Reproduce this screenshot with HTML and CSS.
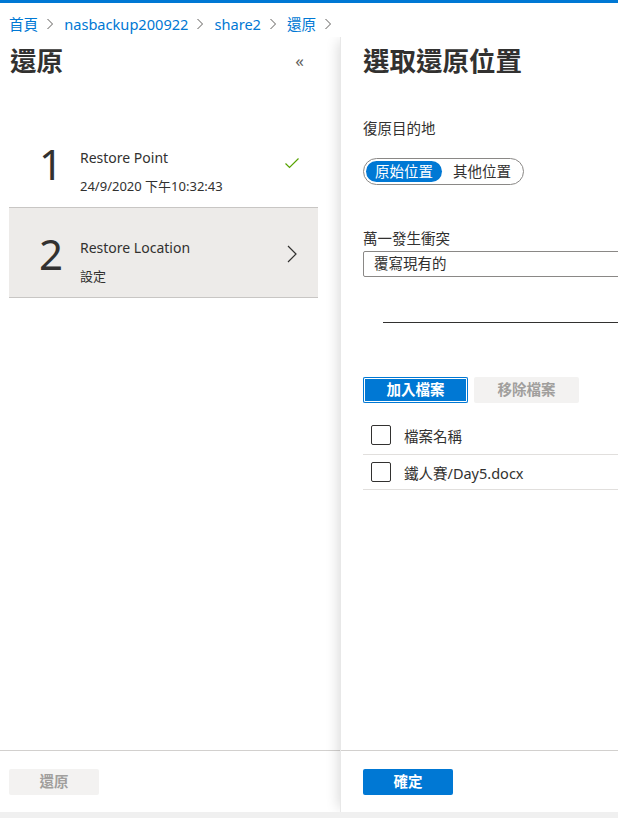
FILE: index.html
```html
<!DOCTYPE html>
<html lang="zh-Hant">
<head>
<meta charset="utf-8">
<title>還原</title>
<link rel="stylesheet" href="styles.css">
</head>
<body>
<div class="topbar"></div>
<nav class="crumbs">
  <a class="crumb">首頁</a>
  <svg class="sep" viewBox="0 0 8 12" width="8" height="12"><path d="M1.5 1 L6.5 6 L1.5 11" fill="none" stroke="#605e5c" stroke-width="1"/></svg>
  <a class="crumb">nasbackup200922</a>
  <svg class="sep" viewBox="0 0 8 12" width="8" height="12"><path d="M1.5 1 L6.5 6 L1.5 11" fill="none" stroke="#605e5c" stroke-width="1"/></svg>
  <a class="crumb">share2</a>
  <svg class="sep" viewBox="0 0 8 12" width="8" height="12"><path d="M1.5 1 L6.5 6 L1.5 11" fill="none" stroke="#605e5c" stroke-width="1"/></svg>
  <a class="crumb">還原</a>
  <svg class="sep" viewBox="0 0 8 12" width="8" height="12"><path d="M1.5 1 L6.5 6 L1.5 11" fill="none" stroke="#605e5c" stroke-width="1"/></svg>
</nav>
<div class="main">
  <section class="left">
    <div class="body">
      <div class="head">
        <h1 class="title">還原</h1>
        <span class="collapse">«</span>
      </div>
      <ul class="steps">
        <li class="step">
          <span class="num">1</span>
          <div class="stext">
            <div class="stitle">Restore Point</div>
            <div class="ssub">24/9/2020 下午10:32:43</div>
          </div>
          <svg class="sicon" viewBox="0 0 16 16" width="16" height="16"><path d="M1.5 8.5 L5.5 12.5 L14.5 3.5" fill="none" stroke="#57a300" stroke-width="1.2"/></svg>
        </li>
        <li class="step active">
          <span class="num">2</span>
          <div class="stext">
            <div class="stitle">Restore Location</div>
            <div class="ssub">設定</div>
          </div>
          <svg class="sicon chev" viewBox="0 0 12 18" width="12" height="18"><path d="M2 1 L10 9 L2 17" fill="none" stroke="#323130" stroke-width="1.2"/></svg>
        </li>
      </ul>
    </div>
    <footer class="foot">
      <button class="btn disabled">還原</button>
    </footer>
  </section>
  <section class="right">
    <div class="body rbody">
      <div class="head">
        <h2 class="title">選取還原位置</h2>
      </div>
      <div class="label first">復原目的地</div>
      <div class="toggle">
        <span class="opt on">原始位置</span>
        <span class="opt">其他位置</span>
      </div>
      <div class="label conflict">萬一發生衝突</div>
      <div class="select">覆寫現有的</div>
      <div class="rule"></div>
      <div class="actions">
        <button class="btn primary focus">加入檔案</button>
        <button class="btn disabled">移除檔案</button>
      </div>
      <div class="table">
        <div class="row header"><span class="cb"></span><span class="cell">檔案名稱</span></div>
        <div class="row"><span class="cb"></span><span class="cell">鐵人賽/Day5.docx</span></div>
      </div>
    </div>
    <footer class="foot">
      <button class="btn primary">確定</button>
    </footer>
  </section>
</div>
<div class="strip"></div>
</body>
</html>
```
FILE: styles.css
```css
* { box-sizing: border-box; }
html, body { margin: 0; padding: 0; background: #fff; }
body {
  font-family: "Noto Sans", "Noto Sans CJK TC", sans-serif;
  color: #323130;
  overflow: hidden;
  width: 618px;
  height: 818px;
}
.topbar { height: 3px; background: #0078d4; }
.crumbs {
  height: 34px;
  padding: 8px 0 0 9px;
  display: flex;
  align-items: center;
  font-size: 14.6px;
}
.crumb { color: #0078d4; line-height: 26px; }
.sep { margin: 0 10px 0 8px; }
.main {
  display: flex;
  height: 775px;
  overflow: hidden;
}
.left, .right {
  display: flex;
  flex-direction: column;
  height: 100%;
  background: #fff;
  flex-shrink: 0;
}
.left { width: 340px; }
.right {
  width: 440px;
  box-shadow: -6px 0 12px -4px rgba(0,0,0,0.14);
  border-left: 1px solid #e8e8e8;
  position: relative;
}
.body { flex: 1; }
.left .body { padding: 0 22px 0 9px; }
.rbody { padding: 0 0 0 22px; }
.head {
  display: flex;
  align-items: center;
  padding-top: 8px;
  height: 40px;
}
.title {
  margin: 0;
  font-size: 26.5px;
  line-height: 32px;
  font-weight: 600;
  flex: 1;
  color: #323130;
}
.left .title { padding-left: 1px; }
.collapse {
  font-size: 17px;
  color: #605e5c;
  margin-right: 14px;
  line-height: 32px;
}
.steps {
  list-style: none;
  margin: 41px 0 0 0;
  padding: 0;
}
.step {
  display: flex;
  height: 90px;
  border-bottom: 1px solid #c8c6c4;
  padding-top: 25px;
}
.step.active { background: #edebe9; }
.num {
  width: 71px;
  padding-left: 30px;
  font-size: 42px;
  line-height: 42px;
  color: #323130;
}
.stext { flex: 1; padding-top: 5px; }
.stitle { font-size: 14px; line-height: 20px; }
.ssub { font-size: 13px; line-height: 20px; margin-top: 8px; }
.sicon { margin: 12px 18px 0 0; }
.chev { margin: 12px 20px 0 0; }
.foot {
  height: 62px;
  border-top: 1px solid #d2d0ce;
  padding: 18px 0 0 9px;
}
.right .foot { padding-left: 22px; }
.btn {
  font-family: inherit;
  font-size: 14.5px;
  height: 26px;
  width: 90px;
  border: 0;
  border-radius: 2px;
  padding: 0 0 3px 0;
  font-weight: 600;
  line-height: 20px;
}
.btn.disabled { background: #f3f2f1; color: #a19f9d; }
.btn.primary { background: #0078d4; color: #fff; }
.label { font-size: 14.5px; line-height: 20px; }
.label.first { margin-top: 41px; }
.toggle {
  margin-top: 20px;
  display: inline-flex;
  align-items: center;
  height: 27px;
  padding: 0 2px;
  border: 1px solid #8a8886;
  border-radius: 14px;
  font-size: 14.5px;
}
.opt { line-height: 21px; padding: 0 10px 0 11px; border-radius: 11px; }
.opt.on { background: #0078d4; color: #fff; padding: 0 9px 0 9px; }
.label.conflict { margin-top: 43px; }
.select {
  margin-top: 3px;
  height: 26px;
  border: 1px solid #8a8886;
  border-radius: 2px;
  font-size: 14.5px;
  line-height: 23px;
  padding-left: 10px;
}
.rule {
  margin: 45px 0 0 20px;
  border-top: 1px solid #323130;
}
.actions { margin-top: 54px; display: flex; gap: 6px; }
.actions .btn { width: 105px; }
.btn.focus { box-shadow: inset 0 0 0 1px #0078d4, inset 0 0 0 2px #fff; }
.table { margin-top: 13px; }
.row {
  display: flex;
  align-items: center;
  height: 35px;
  border-bottom: 1px solid #e1dfdd;
  padding-left: 8px;
  font-size: 14.5px;
}
.row.header { height: 39px; }
.cb {
  width: 20px;
  height: 20px;
  border: 1px solid #323130;
  border-radius: 2px;
  margin-right: 13px;
}
.strip { height: 6px; background: #f0f0f0; }
```
